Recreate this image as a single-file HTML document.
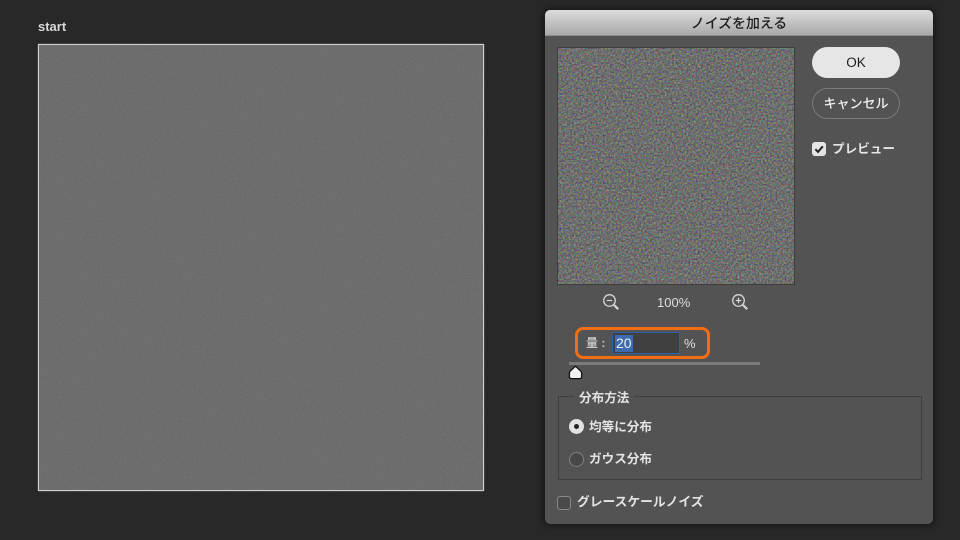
<!DOCTYPE html>
<html lang="ja">
<head>
<meta charset="utf-8">
<style>
html,body{margin:0;padding:0;width:960px;height:540px;overflow:hidden;background:#282828}
body{position:relative;font-family:"Liberation Sans","Noto Sans CJK JP",sans-serif;color:#e8e8e8}
#w{position:absolute;left:0;top:0;width:960px;height:540px;filter:blur(.35px)}
.a{position:absolute;white-space:nowrap}
.t{font-size:12.6px;font-weight:700;line-height:16px;color:#e4e4e4}
svg{display:block}
</style>
</head>
<body>
<svg width="0" height="0" style="position:absolute">
<defs>
<filter id="g" x="0" y="0" width="100%" height="100%" color-interpolation-filters="sRGB">
<feTurbulence type="fractalNoise" baseFrequency="0.7" numOctaves="2" seed="4"/>
<feColorMatrix type="matrix" values="0.07 0 0 0 0.395  0.07 0 0 0 0.395  0.07 0 0 0 0.395  0 0 0 0 1"/>
</filter>
<filter id="c" x="0" y="0" width="100%" height="100%" color-interpolation-filters="sRGB">
<feTurbulence type="fractalNoise" baseFrequency="0.55" numOctaves="2" seed="9"/>
<feColorMatrix type="matrix" values="0.62 0 0 0 0.12  0 0.62 0 0 0.125  0 0 0.62 0 0.12  0 0 0 0 1"/>
<feGaussianBlur stdDeviation="0.35"/>
</filter>
</defs>
</svg>
<div id="w">
<div class="a" style="left:38px;top:19px;font-size:13px;line-height:16px;font-weight:700;color:#d8d8d8">start</div>
<div class="a" style="left:38px;top:44px;width:444px;height:445px;border:1px solid #d0d0d0;box-shadow:0 0 1px #aaa">
<svg width="444" height="445"><rect width="444" height="445" filter="url(#g)"/></svg>
</div>

<!-- dialog -->
<div class="a" style="left:545px;top:10px;width:388px;height:514px;background:#535353;border-radius:5px;box-shadow:0 0 6px 2px rgba(0,0,0,.4);overflow:hidden">
<div class="a" style="left:0;top:0;width:388px;height:25px;background:linear-gradient(#dcdcdc,#a9a9a9);border-bottom:1px solid #8c8c8c;text-align:center;font-size:13.9px;line-height:26px;font-weight:500;color:#1c1c1c">ノイズを加える</div>
</div>

<div class="a" style="left:557px;top:47px;width:236px;height:236px;border:1px solid #3e3e3e">
<svg width="236" height="236"><rect width="236" height="236" filter="url(#c)"/></svg>
</div>

<div class="a" style="left:812px;top:47px;width:88px;height:31px;border-radius:16px;background:#e6e6e6;text-align:center;font-size:13.5px;line-height:31px;font-weight:500;color:#1c1c1c">OK</div>
<div class="a" style="left:812px;top:88px;width:86px;height:29px;border-radius:16px;border:1px solid #7a7a7a;text-align:center;font-size:13px;line-height:29px;font-weight:500;color:#f0f0f0">キャンセル</div>

<div class="a" style="left:812px;top:142px;width:14px;height:14px;border-radius:3px;background:#e4e4e4"></div>
<svg class="a" style="left:812px;top:142px" width="14" height="14" viewBox="0 0 14 14"><path d="M3.4 7.2 L6 9.9 L10.8 4.3" fill="none" stroke="#222" stroke-width="2"/></svg>
<div class="a t" style="left:832px;top:141px">プレビュー</div>

<!-- zoom icons -->
<svg class="a" style="left:602px;top:293px" width="18" height="18" viewBox="0 0 18 18" fill="none" stroke="#d6d6d6"><circle cx="7.5" cy="7.5" r="5.8" stroke-width="1.3"/><path d="M4.8 7.5H10.2" stroke-width="1.2"/><path d="M12 12L16.2 16.2" stroke-width="2.2"/></svg>
<div class="a" style="left:657px;top:295px;font-size:13px;line-height:16px;font-weight:500;color:#dedede">100%</div>
<svg class="a" style="left:731px;top:293px" width="18" height="18" viewBox="0 0 18 18" fill="none" stroke="#d6d6d6"><circle cx="7.5" cy="7.5" r="5.8" stroke-width="1.3"/><path d="M4.8 7.5H10.2M7.5 4.8V10.2" stroke-width="1.2"/><path d="M12 12L16.2 16.2" stroke-width="2.2"/></svg>

<!-- amount -->
<div class="a" style="left:575px;top:327px;width:129px;height:26px;border:3px solid #f26d13;border-radius:8px"></div>
<div class="a t" style="left:586px;top:335px;font-size:12px;color:#c8c8c8">量 :</div>
<div class="a" style="left:612px;top:332px;width:66px;height:20px;border:1px solid #2f5fa8;background:#404040"></div>
<div class="a" style="left:615px;top:335px;width:18px;height:17px;background:#3c6cb0"></div>
<div class="a" style="left:616px;top:335px;font-size:14px;line-height:17px;color:#f0f0f0">20</div>
<div class="a" style="left:684px;top:335px;font-size:13px;line-height:17px;font-weight:500;color:#e0e0e0">%</div>

<!-- slider -->
<div class="a" style="left:569px;top:362px;width:191px;height:3px;background:#7a7a7a"></div>
<svg class="a" style="left:568px;top:365px" width="15" height="15" viewBox="0 0 15 15"><path d="M7.5 1.2 L12.8 6.2 Q13.6 7 13.6 8.5 V11.5 Q13.6 13.6 11.6 13.6 H3.4 Q1.4 13.6 1.4 11.5 V8.5 Q1.4 7 2.2 6.2 Z" fill="#f2f2f2" stroke="#111" stroke-width="1.3" stroke-linejoin="round"/></svg>

<!-- group -->
<div class="a" style="left:558px;top:396px;width:362px;height:82px;border:1px solid #3e3e3e"></div>
<div class="a t" style="left:574px;top:390px;padding:0 5px;background:#535353">分布方法</div>
<div class="a" style="left:569px;top:419px;width:15px;height:15px;border-radius:50%;background:#e2e2e2"></div>
<div class="a" style="left:574px;top:424px;width:5px;height:5px;border-radius:50%;background:#222"></div>
<div class="a t" style="left:589px;top:419px">均等に分布</div>
<div class="a" style="left:569px;top:452px;width:13px;height:13px;border-radius:50%;border:1px solid #808080;background:#484848"></div>
<div class="a t" style="left:589px;top:451px">ガウス分布</div>

<div class="a" style="left:557px;top:496px;width:12px;height:12px;border-radius:3px;border:1px solid #8a8a8a;background:#4a4a4a"></div>
<div class="a t" style="left:577px;top:494px;font-size:12.75px">グレースケールノイズ</div>
</div>
</body>
</html>
